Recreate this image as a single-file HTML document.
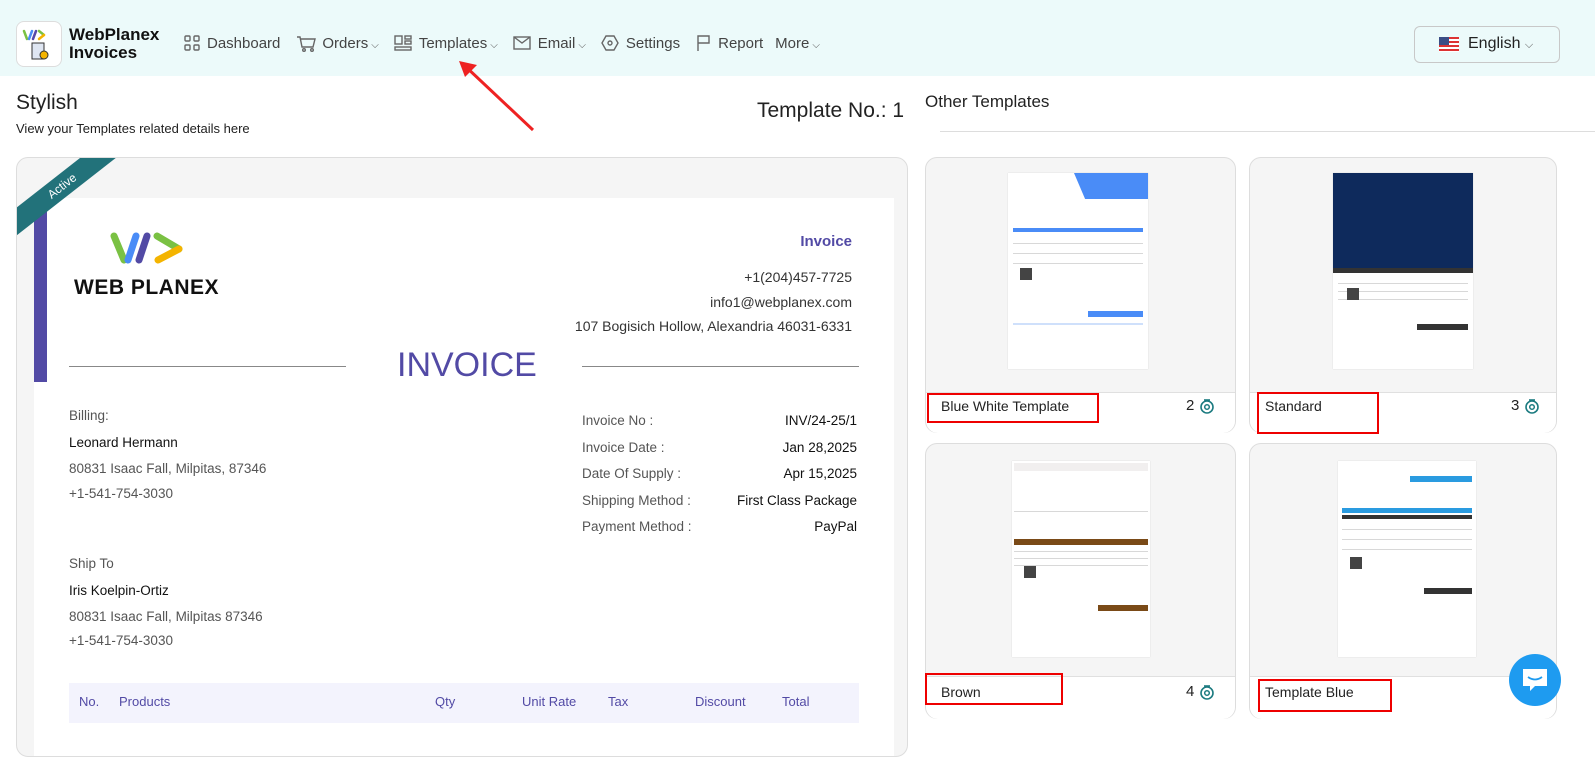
<!DOCTYPE html>
<html><head><meta charset="utf-8"><style>
*{box-sizing:border-box;margin:0;padding:0}
body{width:1595px;height:729px;overflow:hidden;background:#fff;font-family:"Liberation Sans",Arial,sans-serif;position:relative;color:#222}
.a{position:absolute}
.hdr{left:0;top:0;width:1595px;height:76px;background:#ecfafa}
.nav{top:36px;font-size:15px;color:#444;display:flex;align-items:center;gap:6px}
.nav svg{stroke:#666;fill:none;stroke-width:1.4}
.car{font-size:10px;color:#555;margin-left:3px}
.lb{color:#555;font-size:13.5px}
.vl{color:#111;font-size:13.5px}
.card{border:1px solid #ddd;border-radius:12px;background:#f5f5f5}
.foot{background:#fff;border-top:1px solid #e0e0e0;border-radius:0 0 12px 12px}
.red{border:2px solid #e00}
.thumb{background:#fff;box-shadow:0 0 1px #ccc}
.ln{position:absolute;height:1px;background:#d8d8d8}
</style></head><body>
<div class="a hdr"></div>
<div class="a" style="left:16px;top:21px;width:46px;height:46px;background:#fff;border:1px solid #ddd;border-radius:8px">
<svg width="46" height="46" viewBox="0 0 46 46"><path d="M7 9l3 8" stroke="#7ac143" stroke-width="2.5" stroke-linecap="round"/><path d="M12 17l3-8" stroke="#4a8cf7" stroke-width="2.5" stroke-linecap="round"/><path d="M16 17l3-8" stroke="#5748a8" stroke-width="2.5" stroke-linecap="round"/><path d="M22 9l5 4" stroke="#7ac143" stroke-width="2.5" stroke-linecap="round"/><path d="M27 13l-5 4" stroke="#f4b400" stroke-width="2.5" stroke-linecap="round"/><rect x="15" y="21" width="12" height="16" fill="#dfe6f2" stroke="#333"/><circle cx="27" cy="33" r="4" fill="#f4b400" stroke="#333"/></svg></div>
<div class="a" style="left:69px;top:26px;font-size:17px;font-weight:bold;line-height:18px;color:#111">WebPlanex<br>Invoices</div>
<div class="a nav" style="left:183px;top:34px">
<svg width="18" height="18"><rect x="2" y="2" width="5" height="5" rx="1"/><rect x="11" y="2" width="5" height="5" rx="1"/><rect x="2" y="11" width="5" height="5" rx="1"/><rect x="11" y="11" width="5" height="5" rx="1"/></svg><span style="margin-right:10px">Dashboard</span>
<svg width="20" height="18"><path d="M1 3h3l2 10h11l2-8H5"/><circle cx="8" cy="16" r="1.3"/><circle cx="16" cy="16" r="1.3"/></svg><span>Orders<span class="car">⌵</span></span>
<svg width="20" height="18" style="margin-left:8px"><rect x="2" y="2" width="7" height="8"/><rect x="12" y="2" width="6" height="3"/><rect x="12" y="7" width="6" height="3"/><rect x="2" y="13" width="16" height="3"/></svg><span>Templates<span class="car">⌵</span></span>
<svg width="20" height="18" style="margin-left:8px"><rect x="2" y="3" width="16" height="12"/><path d="M2 3l8 6 8-6"/></svg><span>Email<span class="car">⌵</span></span>
<svg width="20" height="18" style="margin-left:8px"><path d="M6 2h8l4 7-4 7H6L2 9z"/><circle cx="10" cy="9" r="2"/></svg><span>Settings</span>
<svg width="18" height="18" style="margin-left:8px"><path d="M4 17V2h11v7H4"/></svg><span>Report</span>
<span style="margin-left:6px">More<span class="car">⌵</span></span>
</div>
<div class="a" style="left:1414px;top:26px;width:146px;height:37px;border:1px solid #c8c8c8;border-radius:6px;font-size:16px;color:#222">
<div class="a" style="left:24px;top:10px;width:20px;height:15px;background:repeating-linear-gradient(#d33 0 2px,#fff 2px 4px)"><div style="width:10px;height:8px;background:#3b4d85"></div></div>
<span class="a" style="left:53px;top:8px">English <span style="font-size:11px;color:#555">⌵</span></span></div>
<svg class="a" style="left:455px;top:60px" width="90" height="75"><path d="M78 70L10 6" stroke="#e22" stroke-width="3"/><path d="M4 1l18 4-12 12z" fill="#e22"/></svg>
<div class="a" style="left:16px;top:91px;font-size:21px;color:#222">Stylish</div>
<div class="a" style="left:16px;top:121px;font-size:13px;color:#222">View your Templates related details here</div>
<div class="a" style="left:757px;top:99px;font-size:21px;color:#222">Template No.: 1</div>
<div class="a" style="left:925px;top:92px;font-size:17px;color:#222">Other Templates</div>
<div class="a" style="left:940px;top:131px;width:655px;height:1px;background:#ddd"></div>
<!-- left card -->
<div class="a card" style="left:16px;top:157px;width:892px;height:600px;overflow:hidden">
<div class="a" style="left:17px;top:40px;width:860px;height:560px;background:#fff"></div>
<div class="a" style="left:17px;top:42px;width:13px;height:182px;background:#524aa5"></div>
<div class="a" style="left:-40px;top:17px;width:170px;height:22px;background:#22727a;transform:rotate(-38deg);transform-origin:center;color:#fff;font-size:12px;text-align:center;line-height:22px">Active</div>
<svg class="a" style="left:93px;top:74px" width="75" height="34"><path d="M4 4l10 24" stroke="#7ac143" stroke-width="7" stroke-linecap="round"/><path d="M18 28l8-24" stroke="#4a8cf7" stroke-width="7" stroke-linecap="round"/><path d="M29 28l8-24" stroke="#524aa5" stroke-width="7" stroke-linecap="round"/><path d="M47 4l22 13" stroke="#7ac143" stroke-width="7" stroke-linecap="round"/><path d="M69 17l-21 11" stroke="#f4b400" stroke-width="7" stroke-linecap="round"/></svg>
<div class="a" style="left:57px;top:118px;font-size:21px;font-weight:bold;color:#111;letter-spacing:0.5px">WEB PLANEX</div>
<div class="a" style="right:55px;top:75px;font-size:15px;font-weight:bold;color:#524aa5">Invoice</div>
<div class="a" style="right:55px;top:107px;font-size:14px;color:#333;text-align:right;line-height:24.5px">+1(204)457-7725<br>info1@webplanex.com<br>107 Bogisich Hollow, Alexandria 46031-6331</div>
<div class="a" style="left:52px;top:208px;width:277px;height:1px;background:#888"></div>
<div class="a" style="left:565px;top:208px;width:277px;height:1px;background:#888"></div>
<div class="a" style="left:380px;top:188px;font-size:34px;color:#524aa5">INVOICE</div>
<div class="a lb" style="left:52px;top:250px">Billing:</div>
<div class="a vl" style="left:52px;top:277px">Leonard Hermann</div>
<div class="a lb" style="left:52px;top:303px">80831 Isaac Fall, Milpitas, 87346</div>
<div class="a lb" style="left:52px;top:328px">+1-541-754-3030</div>
<div class="a lb" style="left:565px;top:250px;line-height:26.5px">Invoice No :<br>Invoice Date :<br>Date Of Supply :<br>Shipping Method :<br>Payment Method :</div>
<div class="a vl" style="right:50px;top:250px;line-height:26.5px;text-align:right">INV/24-25/1<br>Jan 28,2025<br>Apr 15,2025<br>First Class Package<br>PayPal</div>
<div class="a lb" style="left:52px;top:398px">Ship To</div>
<div class="a vl" style="left:52px;top:425px">Iris Koelpin-Ortiz</div>
<div class="a lb" style="left:52px;top:451px">80831 Isaac Fall, Milpitas 87346</div>
<div class="a lb" style="left:52px;top:475px">+1-541-754-3030</div>
<div class="a" style="left:52px;top:525px;width:790px;height:40px;background:#f3f3fd;font-size:13px;color:#524aa5">
<span class="a" style="left:10px;top:11px">No.</span><span class="a" style="left:50px;top:11px">Products</span><span class="a" style="left:366px;top:11px">Qty</span><span class="a" style="left:453px;top:11px">Unit Rate</span><span class="a" style="left:539px;top:11px">Tax</span><span class="a" style="left:626px;top:11px">Discount</span><span class="a" style="left:713px;top:11px">Total</span></div>
</div>
<!-- right cards -->
<div class="a card" style="left:925px;top:157px;width:311px;height:276px"><div class="a foot" style="left:0;top:234px;width:309px;height:41px"></div></div>
<div class="a card" style="left:1249px;top:157px;width:308px;height:276px"><div class="a foot" style="left:0;top:234px;width:306px;height:41px"></div></div>
<div class="a card" style="left:925px;top:443px;width:311px;height:276px"><div class="a foot" style="left:0;top:232px;width:309px;height:43px"></div></div>
<div class="a card" style="left:1249px;top:443px;width:308px;height:276px"><div class="a foot" style="left:0;top:232px;width:306px;height:43px"></div></div>
<!-- thumbs -->
<div class="a thumb" style="left:1008px;top:173px;width:140px;height:196px">
<div class="a" style="left:66px;top:0;width:74px;height:26px;background:#4a8cf7;clip-path:polygon(0 0,100% 0,100% 100%,15% 100%)"></div>
<div class="a" style="left:5px;top:55px;width:130px;height:4px;background:#4a8cf7"></div>
<div class="ln" style="left:5px;top:70px;width:130px"></div><div class="ln" style="left:5px;top:80px;width:130px"></div><div class="ln" style="left:5px;top:90px;width:130px"></div>
<div class="a" style="left:12px;top:95px;width:12px;height:12px;background:#444"></div>
<div class="a" style="left:80px;top:138px;width:55px;height:6px;background:#4a8cf7"></div>
<div class="a" style="left:5px;top:150px;width:130px;height:2px;background:#cfe0fb"></div></div>
<div class="a thumb" style="left:1333px;top:173px;width:140px;height:196px">
<div class="a" style="left:0;top:0;width:140px;height:95px;background:#0e2a5c"></div>
<div class="a" style="left:0;top:95px;width:140px;height:5px;background:#333"></div>
<div class="ln" style="left:5px;top:110px;width:130px"></div><div class="ln" style="left:5px;top:118px;width:130px"></div><div class="ln" style="left:5px;top:126px;width:130px"></div>
<div class="a" style="left:14px;top:115px;width:12px;height:12px;background:#444"></div>
<div class="a" style="left:84px;top:151px;width:51px;height:6px;background:#333"></div></div>
<div class="a thumb" style="left:1012px;top:461px;width:138px;height:196px">
<div class="a" style="left:2px;top:2px;width:134px;height:8px;background:#f1efef"></div>
<div class="a" style="left:2px;top:78px;width:134px;height:6px;background:#7a4a17"></div>
<div class="ln" style="left:2px;top:50px;width:134px"></div><div class="ln" style="left:2px;top:90px;width:134px"></div><div class="ln" style="left:2px;top:97px;width:134px"></div><div class="ln" style="left:2px;top:104px;width:134px"></div>
<div class="a" style="left:12px;top:105px;width:12px;height:12px;background:#444"></div>
<div class="a" style="left:86px;top:144px;width:50px;height:6px;background:#7a4a17"></div></div>
<div class="a thumb" style="left:1338px;top:461px;width:138px;height:196px">
<div class="a" style="left:72px;top:15px;width:62px;height:6px;background:#2a9be0"></div>
<div class="a" style="left:4px;top:47px;width:130px;height:5px;background:#2a9be0"></div>
<div class="a" style="left:4px;top:54px;width:130px;height:4px;background:#333"></div>
<div class="ln" style="left:4px;top:68px;width:130px"></div><div class="ln" style="left:4px;top:78px;width:130px"></div><div class="ln" style="left:4px;top:88px;width:130px"></div>
<div class="a" style="left:12px;top:96px;width:12px;height:12px;background:#444"></div>
<div class="a" style="left:86px;top:127px;width:48px;height:6px;background:#333"></div></div>
<!-- labels -->
<div class="a" style="left:941px;top:398px;font-size:14px;color:#222">Blue White Template</div>
<div class="a" style="left:1265px;top:398px;font-size:14px;color:#222">Standard</div>
<div class="a" style="left:941px;top:684px;font-size:14px;color:#222">Brown</div>
<div class="a" style="left:1265px;top:684px;font-size:14px;color:#222">Template Blue</div>
<div class="a" style="left:1186px;top:397px;font-size:15px">2</div>
<div class="a" style="left:1511px;top:397px;font-size:15px">3</div>
<div class="a" style="left:1186px;top:683px;font-size:15px">4</div>
<svg class="a" style="left:1199px;top:398px" width="16" height="16"><circle cx="8" cy="9" r="6" fill="none" stroke="#1c7b80" stroke-width="1.6"/><circle cx="8" cy="9" r="2.3" fill="none" stroke="#1c7b80" stroke-width="1.5"/><path d="M5 2h6" stroke="#1c7b80" stroke-width="1.6"/></svg>
<svg class="a" style="left:1524px;top:398px" width="16" height="16"><circle cx="8" cy="9" r="6" fill="none" stroke="#1c7b80" stroke-width="1.6"/><circle cx="8" cy="9" r="2.3" fill="none" stroke="#1c7b80" stroke-width="1.5"/><path d="M5 2h6" stroke="#1c7b80" stroke-width="1.6"/></svg>
<svg class="a" style="left:1199px;top:684px" width="16" height="16"><circle cx="8" cy="9" r="6" fill="none" stroke="#1c7b80" stroke-width="1.6"/><circle cx="8" cy="9" r="2.3" fill="none" stroke="#1c7b80" stroke-width="1.5"/><path d="M5 2h6" stroke="#1c7b80" stroke-width="1.6"/></svg>
<div class="a red" style="left:927px;top:393px;width:172px;height:30px"></div>
<div class="a red" style="left:1257px;top:392px;width:122px;height:42px"></div>
<div class="a red" style="left:925px;top:673px;width:138px;height:32px"></div>
<div class="a red" style="left:1258px;top:679px;width:134px;height:33px"></div>
<div class="a" style="left:1509px;top:654px;width:52px;height:52px;border-radius:50%;background:#1e9bf0">
<svg width="52" height="52"><path d="M14 15h24v17h-12l-5 5v-5h-7z" fill="#fff"/><path d="M19 23q7 5 14 0" stroke="#1e9bf0" stroke-width="1.8" fill="none"/></svg></div>
</body></html>
